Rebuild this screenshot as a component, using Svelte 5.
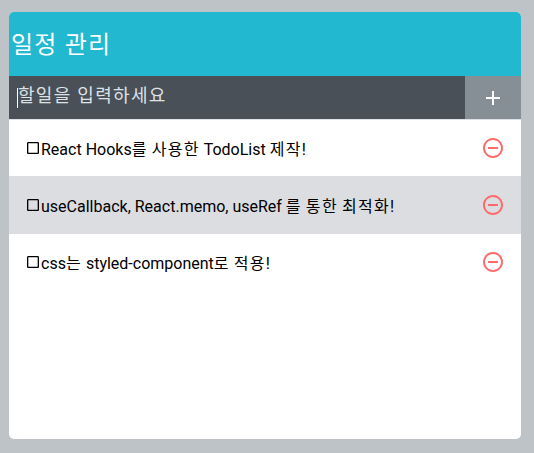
<script>
  const todos = [
    { id: 1, text: 'React Hooks를 사용한 TodoList 제작!' },
    { id: 2, text: 'useCallback, React.memo, useRef 를 통한 최적화!' },
    { id: 3, text: 'css는 styled-component로 적용!' }
  ];

  // Hangul runs are tracked slightly wider than Latin ones.
  const runs = (text) => text.split(/([가-힣]+)/).filter(Boolean);
  const isHangul = (run) => /^[가-힣]/.test(run);
</script>

<div class="page">
  <main class="card">
    <header><h1>일정 관리</h1></header>
    <form onsubmit={(e) => e.preventDefault()}>
      <div class="field"><span class="caret"></span><span class="placeholder">할일을 입력하세요</span></div>
      <button class="add" type="submit" aria-label="add">
        <svg width="24" height="24" viewBox="0 0 24 24"><path fill="currentColor" d="M19 13h-6v6h-2v-6H5v-2h6V5h2v6h6v2z" /></svg>
      </button>
    </form>
    <ul>
      {#each todos as todo (todo.id)}
        <li>
          <svg class="check" width="16" height="16" viewBox="0 0 24 24"><path fill="currentColor" d="M19 5v14H5V5h14m0-2H5c-1.1 0-2 .9-2 2v14c0 1.1.9 2 2 2h14c1.1 0 2-.9 2-2V5c0-1.1-.9-2-2-2z" /></svg>
          <span class="text">{#each runs(todo.text) as run}<span class:hangul={isHangul(run)}>{run}</span>{/each}</span>
          <svg class="remove" width="24" height="24" viewBox="0 0 24 24"><path fill="currentColor" d="M7 11v2h10v-2H7zm5-9C6.48 2 2 6.48 2 12s4.48 10 10 10 10-4.48 10-10S17.52 2 12 2zm0 18c-4.41 0-8-3.59-8-8s3.59-8 8-8 8 3.59 8 8-3.59 8-8 8z" /></svg>
        </li>
      {/each}
    </ul>
  </main>
</div>

<style>
  .page {
    box-sizing: border-box;
    height: 453px;
    padding: 12px 13px 14px 9px;
    background: #bdc3c7;
    font-family: Roboto, 'Noto Sans CJK KR', sans-serif;
    overflow: hidden;
  }
  .card {
    height: 427px;
    background: #fff;
    border-radius: 5px;
    overflow: hidden;
  }
  header {
    box-sizing: border-box;
    display: flex;
    align-items: center;
    height: 64px;
    padding: 2px 0 0 2px;
    background: #22b8cf;
    color: #fff;
  }
  h1 {
    margin: 0;
    font-size: 24px;
    font-weight: 400;
    line-height: 32px;
    letter-spacing: 1.2px;
  }
  form {
    display: flex;
    height: 43px;
    background: #495057;
  }
  .field {
    flex: 1;
    display: flex;
    align-items: flex-start;
    padding: 8px 8px 0;
  }
  .caret {
    width: 1px;
    height: 20px;
    margin-top: 4px;
    background: #fff;
  }
  .placeholder {
    color: #dee2e6;
    font-size: 18px;
    line-height: 24px;
    letter-spacing: 1.3px;
  }
  .add {
    display: flex;
    align-items: center;
    justify-content: center;
    width: 56px;
    padding: 0;
    border: 0;
    background: #868e96;
    color: #fff;
  }
  ul {
    margin: 0;
    padding: 0;
    list-style: none;
  }
  li {
    box-sizing: border-box;
    display: flex;
    align-items: center;
    height: 57px;
    padding: 0 16px;
    border-top: 1px solid #dee2e6;
    color: #000;
  }
  li:nth-child(even) {
    background: #dcdde1;
    border-top-color: #dcdde1;
  }
  li:nth-child(3) {
    border-top-color: #dcdde1;
  }
  .text {
    flex: 1;
    font-size: 16px;
    line-height: 24px;
    white-space: pre;
    padding-top: 4px;
  }
  .hangul {
    letter-spacing: 1.3px;
  }
  .remove {
    color: #ff6b6b;
  }
</style>
